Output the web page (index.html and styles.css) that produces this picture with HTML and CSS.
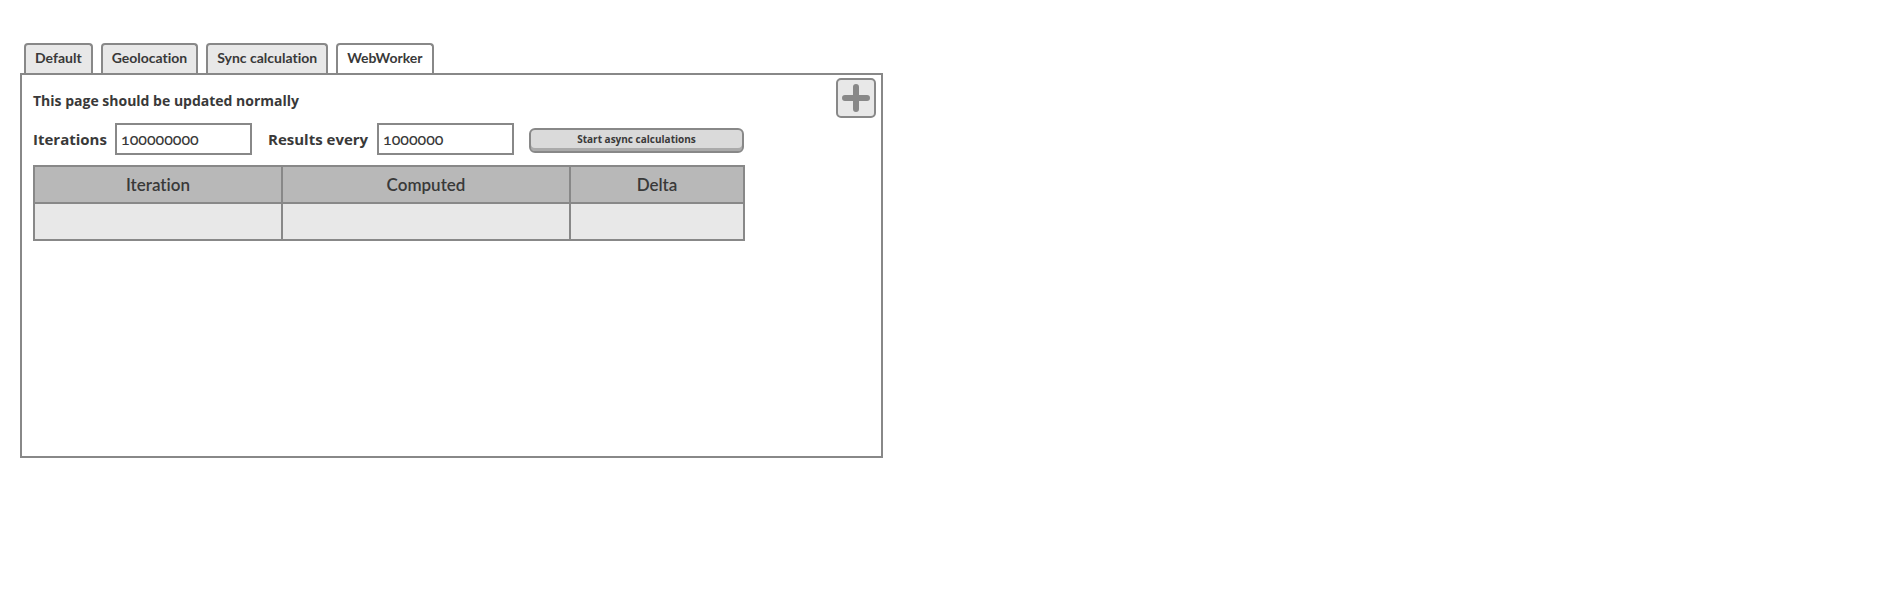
FILE: index.html
```html
<!DOCTYPE html>
<html lang="en">
<head>
<meta charset="utf-8">
<title>WebWorker</title>
<link rel="stylesheet" href="styles.css">
</head>
<body>
<main class="page">
  <div class="tabs" role="tablist">
    <button class="tab" role="tab" aria-selected="false">Default</button>
    <button class="tab" role="tab" aria-selected="false">Geolocation</button>
    <button class="tab" role="tab" aria-selected="false">Sync calculation</button>
    <button class="tab tab-active" role="tab" aria-selected="true">WebWorker</button>
  </div>
  <section class="panel" role="tabpanel">
    <div class="content">
      <h1 class="title">This page should be updated normally</h1>
      <form class="controls">
        <label class="label" for="iterations">Iterations</label>
        <input class="field" id="iterations" type="text" value="100000000">
        <label class="label label-every" for="every">Results every</label>
        <input class="field" id="every" type="text" value="1000000">
        <button class="start" type="button">Start async calculations</button>
      </form>
      <table class="results">
        <thead><tr><th class="col-iteration">Iteration</th><th class="col-computed">Computed</th><th>Delta</th></tr></thead>
        <tbody><tr><td></td><td></td><td></td></tr></tbody>
      </table>
    </div>
    <button class="add" type="button" aria-label="Add">
      <svg width="28" height="28" viewBox="0 0 28 28" aria-hidden="true"><path d="M14 3v22M3 14h22" fill="none" stroke="#888" stroke-width="6" stroke-linecap="round"/></svg>
    </button>
  </section>
</main>
</body>
</html>
```
FILE: styles.css
```css
* { box-sizing: border-box; }
body {
  margin: 0;
  background: #fff;
  color: #393939;
  font-family: Lato, "Open Sans", sans-serif;
  font-variant-ligatures: none;
}
button, input { color: inherit; font-family: inherit; font-variant-ligatures: none; }
.page { max-width: 883px; padding: 43px 0 0 20px; }
.tabs { display: flex; gap: 8px; padding-left: 4px; }
.tab {
  height: 30px;
  padding: 0 9px 2px;
  border: 2px solid #888;
  border-bottom: 0;
  border-radius: 4px 4px 0 0;
  background: #e8e8e8;
  font-size: 14px;
  font-weight: 700;
  line-height: 26px;
}
.tab-active { background: #fff; }
.panel {
  display: flex;
  justify-content: space-between;
  align-items: flex-start;
  min-height: 385px;
  padding: 3px 5px 0 11px;
  border: 2px solid #888;
}
.content { flex: 0 1 712px; padding-top: 11px; }
.title, .label, .start { font-family: "Open Sans", sans-serif; font-weight: 700; }
.title { margin: 0; font-size: 14px; line-height: 24px; }
.controls { display: flex; align-items: center; margin-top: 10px; }
.label { min-width: 74px; font-size: 15px; line-height: 32px; white-space: nowrap; }
.label-every { min-width: 101px; margin-left: 16px; }
.field {
  width: 137px;
  height: 32px;
  margin-left: 8px;
  padding: 0 4px 2px;
  border: 2px solid #888;
  background: #fff;
  font-size: 16px;
  font-weight: 500;
  font-variant-numeric: oldstyle-nums;
}
.start {
  flex: 1;
  height: 25px;
  margin: 3px 1px 0 15px;
  padding: 0 0 3px;
  border: 2px solid #888;
  border-radius: 6px;
  background: #dadada;
  box-shadow: inset 0 -3px #aaa;
  font-size: 10px;
}
.results {
  width: 100%;
  margin-top: 10px;
  border-collapse: collapse;
  table-layout: fixed;
}
.results th, .results td { height: 37px; padding: 0 0 1px; border: 2px solid #888; }
.results th { background: #b8b8b8; font-size: 17px; font-weight: 600; }
.results td { background: #e8e8e8; }
.col-iteration { width: 248px; }
.col-computed { width: 288px; }
.add {
  display: grid;
  place-items: center;
  width: 40px;
  height: 40px;
  padding: 0;
  border: 2px solid #888;
  border-radius: 5px;
  background: #e8e8e8;
}
```
